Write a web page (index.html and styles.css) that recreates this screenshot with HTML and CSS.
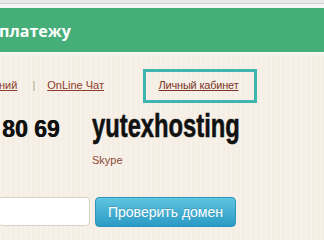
FILE: index.html
```html
<!DOCTYPE html>
<html lang="ru">
<head>
  <meta charset="UTF-8">
  <meta name="viewport" content="width=device-width, initial-scale=1.0">
  <title>Оплата хостинга</title>
  <link rel="stylesheet" href="styles.css">
</head>
<body>
  <div class="topbar"></div>

  <!-- Green title bar -->
  <div class="header">
    <h1>платежу</h1>
  </div>

  <!-- Top links -->
  <div class="nav">
    <div class="links">
      <a href="#" class="first">ний</a>
      <span class="sep">|</span>
      <a href="#">OnLine Чат</a>
    </div>
    <div class="cabinet">
      <a href="#">Личный кабинет</a>
    </div>
  </div>

  <!-- Contacts -->
  <div class="contacts">
    <div class="phone">80 69</div>
    <div class="skype">
      <span class="login">yutexhosting</span>
      <a href="#" class="skype-link">Skype</a>
    </div>
  </div>

  <!-- Domain check -->
  <form class="domain-form">
    <input type="text" class="domain-input">
    <button type="submit">Проверить домен</button>
  </form>
</body>
</html>
```

FILE: styles.css
```css
body {
  margin: 0;
  padding: 0;
  overflow: hidden;
  font-family: "Liberation Sans", Arial, sans-serif;
  background-color: #f5eee4;
  background-image: repeating-linear-gradient(90deg, rgba(255, 255, 255, 0.18) 0 2px, transparent 2px 5px);
}

.topbar {
  height: 3px;
  background: #e9e9e9;
  border-bottom: 1px solid #d2d2d2;
}

.header {
  height: 44px;
  background: #46ae78;
  border-top: 4px solid #f6f6f6;
  border-bottom: 3px solid #f9f5ef;
}

.header h1 {
  margin: 0 0 0 -1px;
  padding-top: 2px;
  font-family: "Open Sans", sans-serif;
  font-size: 16px;
  font-weight: bold;
  line-height: 42px;
  color: #fff;
}

.nav {
  display: flex;
  align-items: center;
  margin-top: 14px;
  font-size: 11px;
}

.nav a {
  color: #8c3d2b;
}

.links {
  width: 143px;
  display: flex;
  align-items: center;
  padding-bottom: 2px;
}

.links .first {
  margin-left: -1px;
}

.sep {
  color: #a9a29a;
  margin: 0 12px 0 15px;
}

.cabinet {
  box-sizing: border-box;
  width: 114px;
  height: 34px;
  border: 3px solid #3eb5ae;
  display: flex;
  align-items: center;
  justify-content: center;
  padding: 0 3px 2px 0;
  letter-spacing: -0.2px;
}

.cabinet a {
  color: #7b3527;
}

.contacts {
  display: flex;
  align-items: baseline;
  margin-top: 6px;
}

.phone {
  box-sizing: border-box;
  width: 92px;
  padding-left: 2px;
  font-size: 23px;
  font-weight: bold;
  line-height: 33px;
  color: #111;
  text-shadow: 0.6px 0 0 #111;
}

.skype {
  display: flex;
  flex-direction: column;
  align-items: flex-start;
}

.login {
  display: inline-block;
  font-size: 33px;
  font-weight: bold;
  line-height: 33px;
  color: #111;
  -webkit-text-stroke: 0.6px #111;
  transform: scaleX(0.72);
  transform-origin: left;
}

.skype-link {
  margin-top: 12px;
  font-size: 11px;
  color: #8b4a36;
  text-decoration: none;
}

.domain-form {
  display: flex;
  gap: 5px;
  margin: 31px 0 0 -2px;
}

.domain-input {
  box-sizing: border-box;
  width: 92px;
  height: 29px;
  border: 1px solid #d8d1c7;
  border-radius: 4px;
  background: #fff;
}

button {
  box-sizing: border-box;
  width: 141px;
  height: 30px;
  border: 1px solid #2f93bb;
  border-radius: 4px;
  background: linear-gradient(#5fc4e0, #2b9ac4);
  color: #fff;
  font-family: "Liberation Sans", Arial, sans-serif;
  font-size: 14px;
  text-shadow: 0 -1px 0 rgba(0, 0, 0, 0.15);
  cursor: pointer;
}
```
